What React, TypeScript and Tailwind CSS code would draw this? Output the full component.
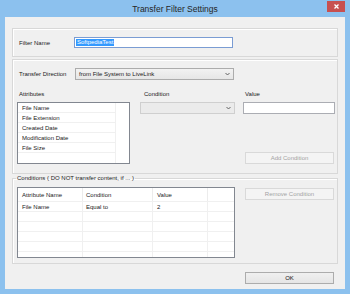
import React from "react";

const font = { fontFamily: '"Liberation Sans", Arial, sans-serif' };

const Chevron = () => (
  <svg width="5" height="4" viewBox="0 0 5 4" className="shrink-0">
    <path d="M0.5 1 L2.5 3 L4.5 1" stroke="#555" strokeWidth="0.9" fill="none" />
  </svg>
);

const Button = ({ label, disabled, className }: { label: string; disabled?: boolean; className?: string }) => (
  <div
    className={`h-[12px] w-[89px] flex items-center justify-center text-[6px] leading-none border ${
      disabled
        ? "border-[#d9d9d9] bg-[#f4f4f4] text-[#a3a3a3]"
        : "border-[#acacac] bg-gradient-to-b from-[#f0f0f0] to-[#e5e5e5] text-[#111]"
    } ${className ?? ""}`}
  >
    {label}
  </div>
);

const attributes = ["File Name", "File Extension", "Created Date", "Modification Date", "File Size"];

const App = () => {
  return (
    <div className="w-[350px] h-[294px] bg-[#8cc1ee] flex flex-col text-[#1a1a1a]" style={font}>
      {/* title bar */}
      <div className="h-[17px] relative flex items-center justify-center shrink-0">
        <span className="text-[8.5px] text-[#262626] leading-none mt-[1px]">Transfer Filter Settings</span>
        <div className="absolute right-[5px] top-[1px] w-[18px] h-[11px] bg-[#c75050] flex items-center justify-center">
          <svg width="5" height="5" viewBox="0 0 5 5">
            <path d="M0.5 0.5 L4.5 4.5 M4.5 0.5 L0.5 4.5" stroke="#fff" strokeWidth="1.3" />
          </svg>
        </div>
      </div>

      {/* client area */}
      <div className="mx-[5px] mb-[5px] flex-1 bg-[#f0f0f0] flex flex-col">
        {/* filter name */}
        <div className="ml-[7px] mt-[11px] w-[326px] h-[29px] border border-[#d8d8d8] shadow-[inset_1px_1px_0_#fff] flex items-center">
          <span className="w-[61px] pl-[6px] text-[6px] leading-none">Filter Name</span>
          <div className="w-[159px] h-[11px] bg-white border border-[#7a9cd3] flex items-center pl-[1px]">
            <span className="bg-[#3399ff] text-white text-[6px] leading-[7px] px-[1px]">SoftpediaTest</span>
          </div>
        </div>

        {/* transfer direction / attributes */}
        <div className="ml-[7px] mt-[2px] w-[326px] h-[115px] border border-[#d8d8d8] shadow-[inset_1px_1px_0_#fff] flex flex-col">
          <div className="mt-[8px] h-[12px] flex items-center">
            <span className="w-[62px] pl-[6px] text-[6px] leading-none">Transfer Direction</span>
            <div className="w-[159px] h-[12px] border border-[#acacac] bg-gradient-to-b from-[#f2f2f2] to-[#e6e6e6] flex items-center justify-between pl-[3px] pr-[3px]">
              <span className="text-[6px] leading-none">from File System to LiveLink</span>
              <Chevron />
            </div>
          </div>

          <div className="mt-[10px] h-[8px] flex items-center text-[6px] leading-none">
            <span className="w-[129px] pl-[6px]">Attributes</span>
            <span className="w-[102px] pl-[2px]">Condition</span>
            <span className="pl-[1px]">Value</span>
          </div>

          <div className="mt-[4px] flex items-start">
            <div className="ml-[4px] w-[113px] h-[62px] bg-white border border-[#828790] flex">
              <div className="w-[97px] flex flex-col">
                {attributes.map((a) => (
                  <div key={a} className="h-[10px] border-b border-[#f0f0f0] flex items-center pl-[4px] text-[6px] leading-none">
                    {a}
                  </div>
                ))}
              </div>
              <div className="border-l border-[#f0f0f0] flex-1" />
            </div>
            <div className="ml-[10px] w-[95px] h-[12px] border border-[#cfcfcf] bg-[#ebebeb] flex items-center justify-end pr-[3px]">
              <Chevron />
            </div>
            <div className="ml-[8px] flex flex-col">
              <div className="w-[92px] h-[12px] bg-white border border-[#abadb3]" />
              <Button label="Add Condition" disabled className="mt-[38px] ml-[2px]" />
            </div>
          </div>
        </div>

        {/* conditions */}
        <fieldset className="ml-[7px] w-[326px] h-[90px] border border-[#d8d8d8] shadow-[inset_1px_1px_0_#fff]">
          <legend className="ml-[3px] px-[1px] text-[6px] leading-[8px]">Conditions ( DO NOT transfer content, if ... )</legend>
          <div className="mt-[5px] flex items-start">
            <div className="ml-[4px] w-[218px] h-[71px] bg-white border border-[#828790] flex flex-col text-[6px] leading-none">
              <div className="h-[14px] flex border-b border-[#f0f0f0] shrink-0">
                <div className="w-[65px] pl-[4px] flex items-center border-r border-[#ececec]">Attribute Name</div>
                <div className="w-[70px] pl-[3px] flex items-center border-r border-[#ececec]">Condition</div>
                <div className="w-[55px] pl-[4px] flex items-center border-r border-[#ececec]">Value</div>
                <div className="flex-1" />
              </div>
              {[0, 1, 2, 3, 4].map((i) => (
                <div key={i} className="h-[10px] flex border-b border-[#f0f0f0] shrink-0">
                  <div className="w-[65px] pl-[4px] flex items-center border-r border-[#f0f0f0]">{i === 0 ? "File Name" : ""}</div>
                  <div className="w-[70px] pl-[3px] flex items-center border-r border-[#f0f0f0]">{i === 0 ? "Equal to" : ""}</div>
                  <div className="w-[55px] pl-[4px] flex items-center border-r border-[#f0f0f0]">{i === 0 ? "2" : ""}</div>
                  <div className="flex-1" />
                </div>
              ))}
              <div className="flex-1 flex">
                <div className="w-[65px] border-r border-[#f0f0f0]" />
                <div className="w-[70px] border-r border-[#f0f0f0]" />
                <div className="w-[55px] border-r border-[#f0f0f0]" />
              </div>
            </div>
            <Button label="Remove Condition" disabled className="ml-[10px] mt-[1px]" />
          </div>
        </fieldset>

        <div className="mt-[8px] ml-[240px]">
          <Button label="OK" />
        </div>
      </div>
    </div>
  );
};

export default App;
